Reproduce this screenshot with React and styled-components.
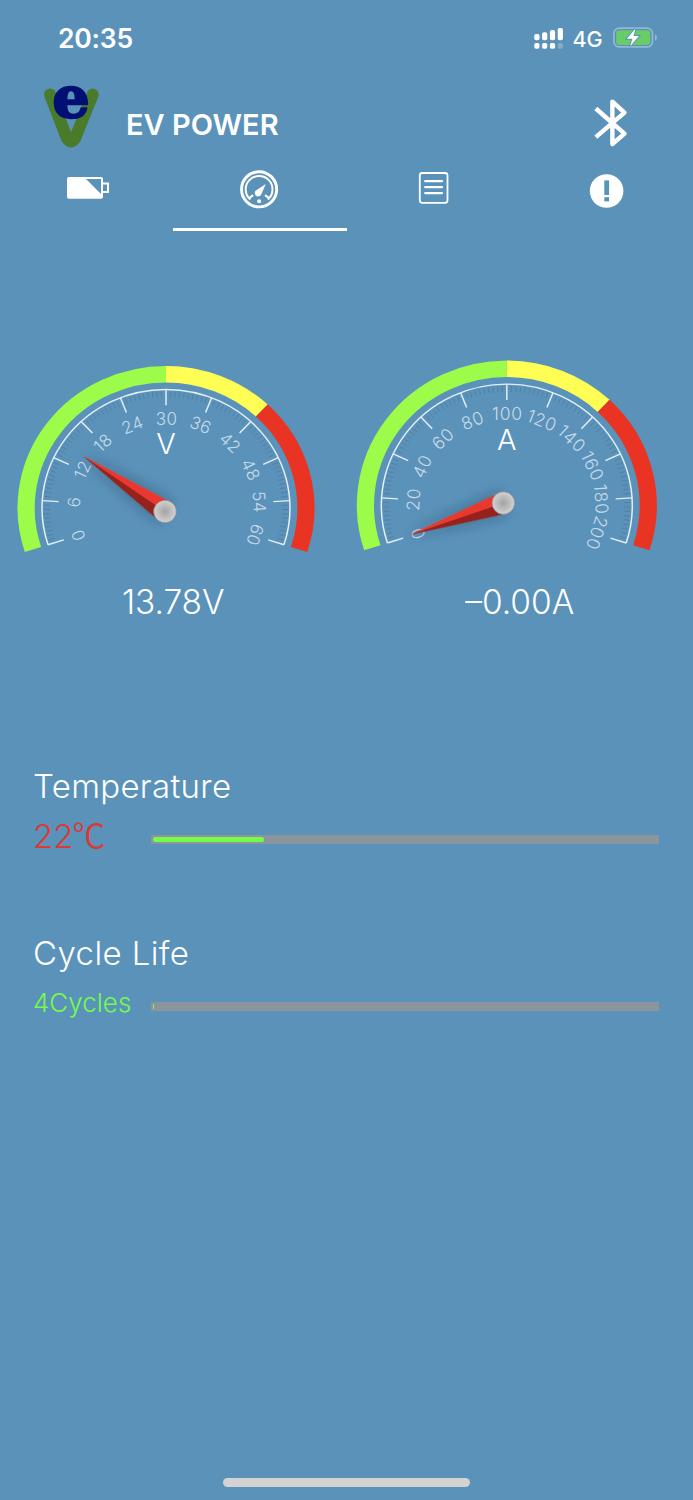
import styled, { createGlobalStyle } from "styled-components";

const GlobalStyles = createGlobalStyle`
    * {
        box-sizing: border-box;
        margin: 0;
        padding: 0;
    }

    body {
        background-color: #5a92ba;
        color: #fff;
        font-family: Inter, "Noto Sans CJK SC", sans-serif;
    }

    svg {
        display: block;
        overflow: visible;
    }
`;

const Screen = styled.div`
    width: 693px;
    height: 1500px;
    display: flex;
    flex-direction: column;
    overflow: hidden;
`;

const StatusBar = styled.div`
    height: 76px;
    padding: 0 36px 0 58px;
    display: flex;
    align-items: center;
    justify-content: space-between;
`;

const Clock = styled.span`
    font-size: 26.5px;
    font-weight: 600;
    letter-spacing: -0.2px;
`;

const StatusIcons = styled.div`
    display: flex;
    align-items: center;
    gap: 10px;
`;

const Network = styled.span`
    width: 30px;
    font-size: 21.5px;
    line-height: 26px;
    font-weight: 500;
    padding-top: 2px;
`;

const Header = styled.header`
    height: 88px;
    padding: 8px 65px 0 43px;
    display: flex;
    align-items: flex-start;
`;

const Title = styled.h1`
    flex: 1;
    margin: 22.5px 0 0 27px;
    font-size: 29px;
    line-height: 36px;
    font-weight: 600;
    letter-spacing: 0;
`;

const BluetoothButton = styled.button`
    margin-top: 15px;
    border: none;
    background: none;
`;

const Tabs = styled.nav`
    height: 67px;
    display: grid;
    grid-template-columns: repeat(4, 1fr);
`;

const Tab = styled.button`
    display: flex;
    justify-content: center;
    padding-top: 3px;
    border: none;
    border-bottom: 3.5px solid ${(props) => (props.$active ? "#fff" : "transparent")};
    background: none;
`;

const Gauges = styled.section`
    padding-top: 119px;
    display: grid;
    grid-template-columns: repeat(2, 1fr);
    height: 535px;
    align-content: start;
`;

const Dial = styled.svg`
    width: 100%;
    height: 220px;
`;

const Reading = styled.p`
    margin-top: 11px;
    text-align: center;
    font-size: 33.5px;
    line-height: 42px;
    font-weight: 350;
    letter-spacing: ${(props) => props.$spacing || "0"};
`;

const Metric = styled.section`
    height: 167px;
    padding: 0 34px;
`;

const MetricName = styled.h2`
    margin-left: -1px;
    font-size: 33px;
    line-height: 40px;
    font-weight: 350;
    letter-spacing: ${(props) => props.$spacing};
    white-space: nowrap;
`;

const MetricRow = styled.div`
    height: 50px;
    margin-top: 8px;
    display: flex;
    align-items: center;
`;

const MetricValue = styled.span`
    width: 117px;
    padding-bottom: 6px;
    font-size: ${(props) => props.$size};
    font-weight: 350;
    line-height: 44px;
    color: ${(props) => props.$color};
    white-space: nowrap;
    text-indent: -1px;
`;

const Unit = styled.span`
    margin-left: -1px;
    font-family: "Noto Sans CJK SC", sans-serif;
    line-height: 1;
`;

const Track = styled.div`
    flex: 1;
    height: 8.5px;
    margin-top: 1px;
    padding: 1.5px;
    background-color: #8b959c;
`;

const Fill = styled.div`
    height: 5.5px;
    border-radius: 3px;
    background-color: #75fb4c;
`;

const HomeIndicator = styled.div`
    width: 247px;
    height: 8.5px;
    margin: auto auto 13.5px 223px;
    border-radius: 5px;
    background-color: #d3d3d3;
`;

const dials = [
    {
        unit: "V",
        step: 6,
        cx: 166,
        cy: 158.1,
        r: 148.5,
        squash: 0.957,
        unitY: 104,
        labelRadius: 93,
        labelSize: 17,
        labelSpacing: 0.5,
        hub: { x: 165, y: 161.5 },
        angle: 34.2,
        reading: "13.78V",
        spacing: "-0.1px",
    },
    {
        unit: "A",
        step: 20,
        cx: 159.8,
        cy: 155.5,
        r: 150,
        squash: 0.967,
        unitY: 100,
        labelRadius: 94,
        labelSize: 17.5,
        labelSpacing: 0.8,
        hub: { x: 156.4, y: 153 },
        angle: -18.8,
        reading: "–0.00A",
        spacing: "0px",
    },
];

// angle is measured clockwise from the top of the dial
function polar(r, deg) {
    const a = (deg * Math.PI) / 180;
    return [r * Math.sin(a), -r * Math.cos(a)];
}

function arc(r, from, to) {
    const [x1, y1] = polar(r, from);
    const [x2, y2] = polar(r, to);
    const large = to - from > 180 ? 1 : 0;
    return `M${x1} ${y1}A${r} ${r} 0 ${large} 1 ${x2} ${y2}`;
}

function Tick({ from, to, deg, ...rest }) {
    const [x1, y1] = polar(from, deg);
    const [x2, y2] = polar(to, deg);
    return <line x1={x1} y1={y1} x2={x2} y2={y2} {...rest} />;
}

function Gauge({ dial }) {
    const { cx, cy, r, squash, hub } = dial;
    const band = r - 8.6;
    const scale = r - 24.5;
    const majors = Array.from({ length: 11 }, (_, i) => i);
    const minors = Array.from({ length: 101 }, (_, i) => i).filter((i) => i % 10);
    return (
        <div>
            <Dial>
                <defs>
                    <radialGradient id={`hub${dial.unit}`}>
                        <stop offset="0" stopColor="#a3a3a3" />
                        <stop offset="1" stopColor="#d2d2d2" />
                    </radialGradient>
                    <filter id={`shade${dial.unit}`} x="-30%" y="-150%" width="160%" height="400%">
                        <feDropShadow dx="0" dy="0" stdDeviation="7" floodColor="#123" floodOpacity="0.4" />
                    </filter>
                </defs>
                <g transform={`translate(${cx} ${cy}) scale(1 ${squash})`} fill="none">
                    <path d={arc(band, -108, 0)} stroke="#9dfb4a" strokeWidth="17.2" />
                    <path d={arc(band, 0, 43.2)} stroke="#fffe54" strokeWidth="17.2" />
                    <path d={arc(band, 43.2, 108)} stroke="#e93423" strokeWidth="17.2" />
                    {minors.map((i) => (
                        <Tick
                            key={i}
                            from={scale - 2}
                            to={scale - 8}
                            deg={-108 + i * 2.16}
                            stroke="#4b7594"
                            strokeWidth="1"
                            opacity="0.6"
                        />
                    ))}
                    <path d={arc(scale, -108, 108)} stroke="#e4eef5" strokeWidth="1.5" />
                    {majors.map((i) => (
                        <Tick
                            key={i}
                            from={scale}
                            to={scale - 16.5}
                            deg={-108 + i * 21.6}
                            stroke="#e4eef5"
                            strokeWidth="1.5"
                        />
                    ))}
                </g>
                {majors.map((i) => {
                    const deg = -108 + i * 21.6;
                    const [x, y] = polar(dial.labelRadius, deg);
                    return (
                        <text
                            key={i}
                            transform={`translate(${cx + x + 0.6} ${cy + y * squash - 0.5}) rotate(${deg})`}
                            y="6.2"
                            textAnchor="middle"
                            fontSize={dial.labelSize}
                            letterSpacing={dial.labelSpacing}
                            fontWeight="300"
                            fill="#c9dae6"
                        >
                            {i * dial.step}
                        </text>
                    );
                })}
                <text x={cx} y={dial.unitY} textAnchor="middle" fontSize="29" fontWeight="300" fill="#fff">
                    {dial.unit}
                </text>
                <g transform={`translate(${hub.x} ${hub.y}) rotate(${dial.angle})`}>
                    <g filter={`url(#shade${dial.unit})`}>
                        <path d="M-99.5 0L0 -11V0Z" fill="#ea372d" />
                        <path d="M-99.5 0L0 0V11Z" fill="#95201d" />
                    </g>
                    <circle r="11.3" fill={`url(#hub${dial.unit})`} stroke="#8a8f8c" strokeWidth="0.7" />
                </g>
            </Dial>
            <Reading $spacing={dial.spacing}>{dial.reading}</Reading>
        </div>
    );
}

function Signal() {
    const tops = [6, 4.3, 2, 0];
    return (
        <svg width="29" height="21" fill="#fff">
            {tops.map((top, i) => (
                <g key={top}>
                    <rect x={0.3 + i * 7.8} y={top} width="5.2" height={12.3 - top} rx="1.8" />
                    <rect
                        x={0.3 + i * 7.8}
                        y="15"
                        width="5.2"
                        height="5.7"
                        rx="1.8"
                        opacity={i === 3 ? 0.25 : 1}
                    />
                </g>
            ))}
        </svg>
    );
}

function ChargingBattery() {
    return (
        <svg width="44.5" height="20.5">
            <rect x="0.9" y="0.1" width="38.6" height="18.8" rx="5.5" fill="none" stroke="#93b8d2" strokeWidth="1.7" />
            <rect x="3.2" y="2.2" width="34" height="14.7" rx="3.3" fill="#67ce67" />
            <path d="M42 6.2Q44 7.2 44 9.4Q44 11.7 42 12.7Z" fill="#93b8d2" />
            <path
                d="M22.5 0.6L13.8 10.8H19.3L17.2 18.2L26 8H20.6Z"
                fill="#fff"
                stroke="#5a92ba"
                strokeWidth="2"
                paintOrder="stroke"
            />
        </svg>
    );
}

function Logo() {
    return (
        <svg width="56" height="66" viewBox="43 83 56 66">
            <path
                d="M50 93.5L67 137.5Q71 143.5 75 137.5L92.7 93.5"
                fill="none"
                stroke="#4a7b2b"
                strokeWidth="12"
                strokeLinecap="round"
                strokeLinejoin="round"
            />
            <text
                transform="translate(71 116) scale(1.1 1.06)"
                textAnchor="middle"
                fontFamily="DejaVu Serif, serif"
                fontWeight="700"
                fontSize="53"
                fill="#020f73"
                stroke="#020f73"
                strokeWidth="2.2"
                strokeLinejoin="round"
            >
                e
            </text>
        </svg>
    );
}

function BluetoothIcon() {
    return (
        <svg width="34" height="48" viewBox="594 99 34 48" fill="none" stroke="#fff" strokeWidth="4.4" strokeLinejoin="round">
            <path d="M595.8 108.5L624.5 133.6L612.4 144V101.6L624.5 112.6L595.8 137.2" />
        </svg>
    );
}

function BatteryIcon() {
    return (
        <svg width="44" height="44" fill="none" stroke="#fff">
            <rect x="3" y="11" width="34" height="19.8" rx="1" strokeWidth="2" />
            <path d="M3 11H20L37 28V31H3Z" fill="#fff" stroke="none" />
            <path d="M38 16.5H43V25H38" strokeWidth="2" />
        </svg>
    );
}

function GaugeIcon() {
    return (
        <svg width="44" height="44" fill="none" stroke="#fff">
            <circle cx="21.1" cy="22.3" r="17.6" strokeWidth="2.9" />
            <path d="M12.4 32.6A13.4 13.4 0 1 1 29.8 32.6" strokeWidth="2" />
            <path d="M11.4 30.8L15.2 28.2M30.8 30.8L27 28.2" strokeWidth="2" />
            <path d="M27.8 17L23.4 27A3.4 3.4 0 1 1 18.6 23Z" fill="#fff" stroke="none" />
            <circle cx="21.1" cy="34.2" r="2" fill="#fff" stroke="none" />
        </svg>
    );
}

function ListIcon() {
    return (
        <svg width="44" height="44" fill="none" stroke="#fff">
            <rect x="8.8" y="6" width="27.7" height="29.8" rx="2.5" strokeWidth="1.8" />
            <path d="M14.2 14.2H31M14.2 20.2H31M14.2 26.1H31" strokeWidth="2.2" strokeLinecap="round" />
        </svg>
    );
}

function AlertIcon() {
    return (
        <svg width="44" height="44">
            <circle cx="22.6" cy="24" r="16.8" fill="#fff" />
            <rect x="20.3" y="13.4" width="4.8" height="14.6" fill="#5a92ba" />
            <rect x="20.3" y="30.2" width="4.8" height="4.2" fill="#5a92ba" />
        </svg>
    );
}

const tabs = [BatteryIcon, GaugeIcon, ListIcon, AlertIcon];

function App() {
    return (
        <>
            <GlobalStyles />
            <Screen>
                <StatusBar>
                    <Clock>20:35</Clock>
                    <StatusIcons>
                        <Signal />
                        <Network>4G</Network>
                        <ChargingBattery />
                    </StatusIcons>
                </StatusBar>
                <Header>
                    <Logo />
                    <Title>EV POWER</Title>
                    <BluetoothButton>
                        <BluetoothIcon />
                    </BluetoothButton>
                </Header>
                <Tabs>
                    {tabs.map((Icon, i) => (
                        <Tab key={i} $active={i === 1}>
                            <Icon />
                        </Tab>
                    ))}
                </Tabs>
                <Gauges>
                    {dials.map((dial) => (
                        <Gauge key={dial.unit} dial={dial} />
                    ))}
                </Gauges>
                <Metric>
                    <MetricName $spacing="0.3px">Temperature</MetricName>
                    <MetricRow>
                        <MetricValue $size="33px" $color="#d93a35">
                            22<Unit>℃</Unit>
                        </MetricValue>
                        <Track>
                            <Fill style={{ width: "22%" }} />
                        </Track>
                    </MetricRow>
                </Metric>
                <Metric>
                    <MetricName $spacing="0.4px">Cycle Life</MetricName>
                    <MetricRow>
                        <MetricValue $size="26px" $color="#75fb4c">
                            4Cycles
                        </MetricValue>
                        <Track>
                            <Fill style={{ width: "0.1%" }} />
                        </Track>
                    </MetricRow>
                </Metric>
                <HomeIndicator />
            </Screen>
        </>
    );
}

export default App;
